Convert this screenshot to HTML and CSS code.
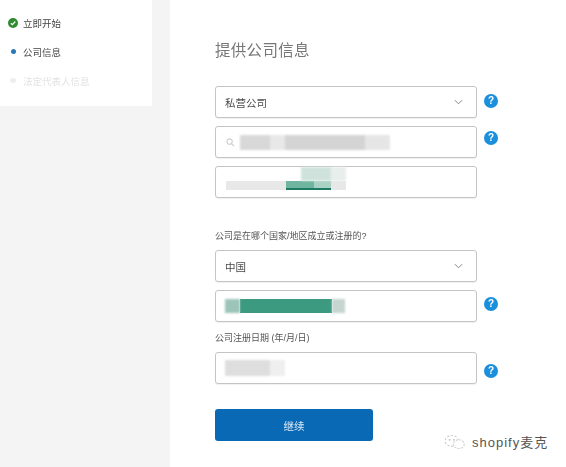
FILE: index.html
```html
<!DOCTYPE html>
<html lang="zh">
<head>
<meta charset="utf-8">
<title>提供公司信息</title>
<link rel="stylesheet" href="styles.css">
</head>
<body>
<div class="page">
  <aside class="side">
    <ul class="steps">
      <li class="step"><svg class="mark" viewBox="0 0 10 10"><circle cx="5" cy="5" r="5" fill="#2e8b2e"/><path d="M2.8 5.2 4.4 6.7 7.3 3.5" fill="none" stroke="#fff" stroke-width="1.2"/></svg>立即开始</li>
      <li class="step"><span class="markbox"><span class="dot"></span></span>公司信息</li>
      <li class="step off"><span class="markbox"><span class="dot pale"></span></span>法定代表人信息</li>
    </ul>
  </aside>
  <main class="main">
    <h1 class="title">提供公司信息</h1>
    <div class="row first">
      <div class="field"><span>私营公司</span><svg class="chev" viewBox="0 0 10 6"><path d="M1 1 5 5 9 1" fill="none" stroke="#777" stroke-width="1"/></svg></div>
      <span class="help h1">?</span>
    </div>
    <div class="row">
      <div class="field start">
        <svg class="search" viewBox="0 0 10 10"><circle cx="4" cy="4" r="3" fill="none" stroke="#ccc" stroke-width="1.2"/><path d="M6.2 6.2 9 9" stroke="#ccc" stroke-width="1.2"/></svg>
        <span class="blur w150"></span>
      </div>
      <span class="help up">?</span>
    </div>
    <div class="row">
      <div class="field blurbox">
        <div class="stack">
          <span class="blur t1"></span>
          <span class="blur t2"><span class="seg"></span></span>
        </div>
      </div>
    </div>
    <label class="label gap">公司是在哪个国家/地区成立或注册的?</label>
    <div class="row">
      <div class="field"><span>中国</span><svg class="chev" viewBox="0 0 10 6"><path d="M1 1 5 5 9 1" fill="none" stroke="#777" stroke-width="1"/></svg></div>
    </div>
    <div class="row">
      <div class="field start"><span class="blur g15"></span><span class="blur teal"></span><span class="blur g13"></span></div>
      <span class="help h5">?</span>
    </div>
    <label class="label date">公司注册日期 (年/月/日)</label>
    <div class="row tight">
      <div class="field start"><span class="blur w60"></span></div>
      <span class="help down">?</span>
    </div>
    <button class="btn" type="button">继续</button>
  </main>
</div>
<div class="mark-wm">
  <svg class="wx" viewBox="0 0 22 16"><ellipse cx="8" cy="7" rx="6" ry="5" fill="none" stroke="#ccc" stroke-dasharray="2 1.5"/><ellipse cx="14.5" cy="10" rx="5" ry="4" fill="#fff" stroke="#d4d4d4" stroke-dasharray="2 1"/><circle cx="6" cy="6" r=".8" fill="#bbb"/><circle cx="10" cy="6" r=".8" fill="#bbb"/></svg>
  <span>shopify麦克</span>
</div>
</body>
</html>
```
FILE: styles.css
```css
* { box-sizing: border-box; }
html, body { margin: 0; padding: 0; }
body {
  width: 566px;
  height: 467px;
  overflow: hidden;
  background: #fff;
  position: relative;
  font-family: "Liberation Sans", "Noto Sans CJK SC", sans-serif;
  color: #4a4a4a;
}
.page { display: flex; height: 467px; filter: blur(.3px); }
.side { width: 170px; flex: none; background: #f4f4f4; padding-right: 18px; }
.steps {
  list-style: none;
  margin: 0;
  padding: 8px 0 0 8px;
  height: 106px;
  background: #fff;
}
.step {
  display: flex;
  align-items: center;
  height: 29px;
  font-size: 9.5px;
  color: #444;
}
.step.off { color: #e2e2e2; }
.mark { width: 10px; height: 10px; margin-right: 5px; flex: none; }
.markbox { width: 10px; margin-right: 5px; display: flex; justify-content: center; flex: none; }
.dot { width: 5px; height: 5px; border-radius: 50%; background: #2a78b8; }
.dot.pale { background: #eee; width: 6px; }
.main { flex: 1; padding: 40px 0 0 45px; }
.title {
  margin: 0 0 25px;
  height: 21px;
  line-height: 21px;
  font-size: 15.5px;
  font-weight: 400;
  color: #777;
  letter-spacing: .3px;
}
.row { display: flex; align-items: center; margin-bottom: 8px; }
.field {
  width: 262px;
  height: 32px;
  border: 1px solid #c4c4c4;
  border-radius: 3px;
  padding: 0 13px 0 9px;
  display: flex;
  align-items: center;
  justify-content: space-between;
  font-size: 10.5px;
  color: #4a4a4a;
  background: #fff;
  box-shadow: 0 1px 1px rgba(0,0,0,.06);
}
.field.start { justify-content: flex-start; }
.field.start .search { margin-left: 1px; }
.field.blurbox { padding: 0 0 0 10px; align-items: flex-end; }
.chev { width: 9px; height: 6px; }
.search { width: 9px; height: 9px; margin-right: 5px; flex: none; }
.help {
  width: 14px;
  height: 14px;
  margin-left: 7px;
  border-radius: 50%;
  background: #1a8fdc;
  color: #fff;
  font-size: 10px;
  font-weight: 700;
  line-height: 14px;
  text-align: center;
  flex: none;
}
.help.h1 { margin-bottom: 2px; }
.help.h5 { margin-bottom: 4px; }
.help.up { align-self: flex-start; margin-top: 5px; }
.help.down { align-self: flex-end; margin-bottom: 6px; }
.blur { display: block; height: 15px; filter: blur(1px); }
.w150 {
  width: 150px;
  height: 15px;
  background: linear-gradient(90deg, #d8d8d8 0 30px, #e8e8e8 30px 45px, #d4d4d4 45px 125px, #e6e6e6 125px);
}
.w60 { width: 60px; height: 16px; background: linear-gradient(90deg, #dedede 0 45px, #efefef 45px); }
.stack { width: 120px; padding-bottom: 7px; display: flex; flex-direction: column; align-items: flex-end; }
.t1 { width: 60px; height: 14px; background: linear-gradient(90deg, transparent 0 15px, #cfe3dc 15px 45px, #e8eeeb 45px); }
.t2 { width: 120px; height: 9px; background: #e8e8e8; display: flex; justify-content: flex-end; padding-right: 15px; filter: none; }
.seg { width: 45px; height: 9px; background: linear-gradient(90deg, #6fb5a0 0 28px, #a9d2c5 28px); border-bottom: 2px solid #1d7a63; }
.g15 { width: 15px; height: 14px; background: #9cc4b8; }
.teal { width: 92px; height: 14px; background: #3b9a80; filter: none; }
.g13 { width: 13px; height: 14px; background: #c5d5cf; }
.label { display: block; font-size: 9px; color: #555; height: 13px; line-height: 13px; }
.label.gap { margin: 32px 0 7px; }
.label.date { margin: 10px 0 7px; }
.row.tight { margin-bottom: 25px; }
.btn {
  display: block;
  width: 158px;
  height: 32px;
  border: 0;
  border-radius: 3px;
  background: #0a69b5;
  color: #dbe9f5;
  font: 10.5px "Liberation Sans", "Noto Sans CJK SC", sans-serif;
}
.mark-wm {
  position: absolute;
  left: 443px;
  top: 432px;
  display: flex;
  align-items: center;
  gap: 5px;
  font-size: 13px;
  color: #555;
  letter-spacing: 1px;
}
.wx { width: 24px; height: 18px; }
```
